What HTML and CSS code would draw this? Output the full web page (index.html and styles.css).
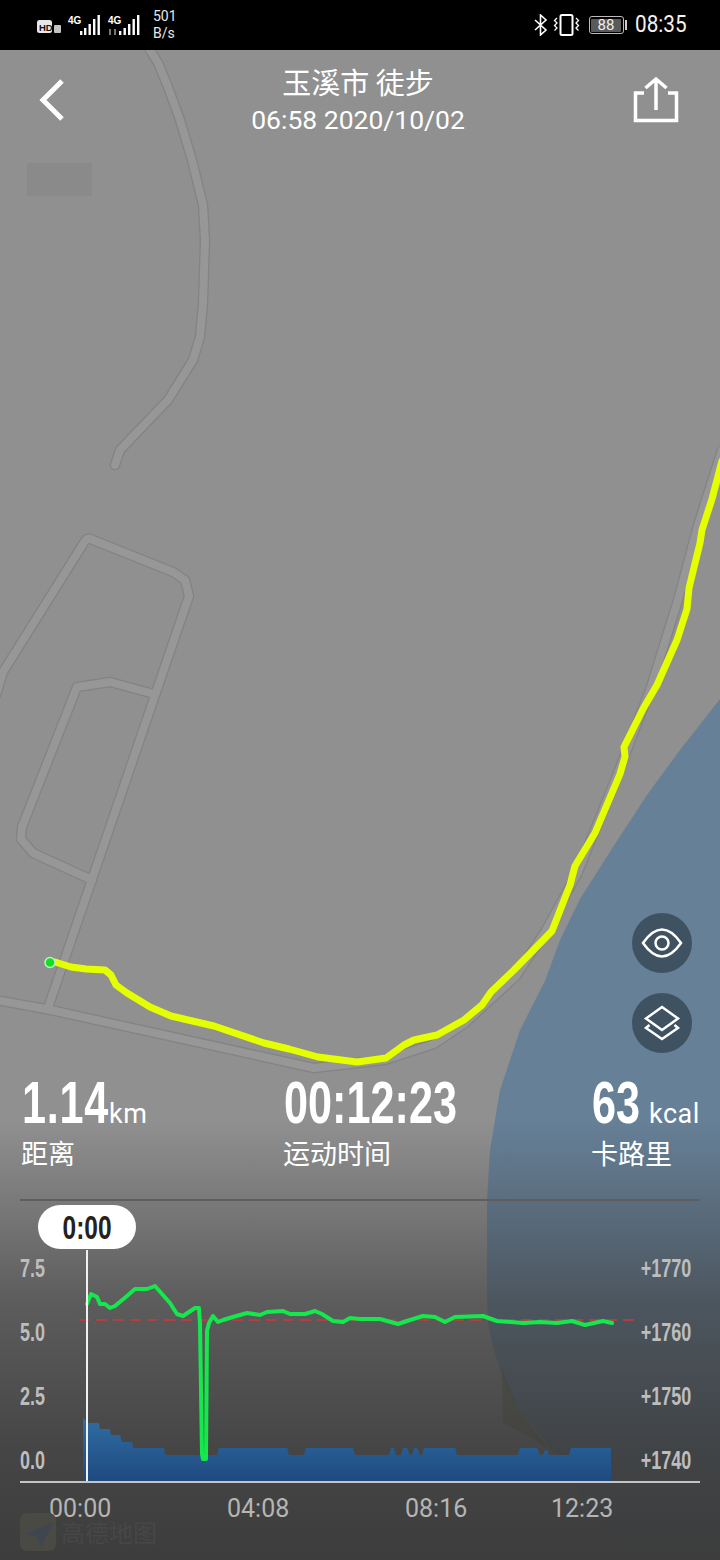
FILE: index.html
```html
<!DOCTYPE html>
<html lang="zh-CN">
<head>
<meta charset="utf-8">
<title>玉溪市 徒步</title>
<link rel="stylesheet" href="styles.css">
</head>
<body>
<div class="screen">
  <header class="statusbar">
    <div class="status-group">
      <svg class="status-left" width="104" height="26" viewBox="37 12 104 26">
        <rect x="37" y="20" width="15" height="13" rx="2.5" fill="#e8e8e8"/>
        <rect x="54" y="25" width="7" height="8" rx="1" fill="#c4c4c4"/>
        <g fill="#fff">
          <rect x="80" y="31" width="2.4" height="4"/><rect x="84" y="28" width="2.4" height="7"/><rect x="88.5" y="24" width="2.4" height="11"/><rect x="93" y="19" width="2.4" height="16"/><rect x="97.5" y="15" width="2.4" height="20"/>
          <rect x="119" y="31" width="2.4" height="4"/><rect x="123.5" y="28" width="2.4" height="7"/><rect x="128" y="24" width="2.4" height="11"/><rect x="132.5" y="19" width="2.4" height="16"/><rect x="137" y="15" width="2.4" height="20"/>
        </g>
        <path d="M110 29v6M115 29v6" stroke="#777" stroke-width="2"/>
        <text class="net" x="68" y="24">4G</text>
        <text class="net" x="108" y="24">4G</text>
        <text class="hd" x="39" y="30.5">HD</text>
      </svg>
      <div class="speed"><span>501</span><span>B/s</span></div>
    </div>
    <div class="status-group right">
      <svg width="14" height="22" viewBox="0 0 14 22" fill="none" stroke="#fff" stroke-width="1.6"><path d="M1 6l11 10-5.500 5V1l5.500 5L1 16"/></svg>
      <svg width="28" height="24" viewBox="0 0 28 24" fill="none" stroke="#fff" class="vibrate"><rect x="7.500" y="2" width="12" height="20" rx="1.500" stroke-width="2"/><path d="M4 5L1.500 7.500 4 10 1.500 12.500 4 15 1.500 17.500M23 5l2.500 2.500L23 10l2.500 2.500L23 15l2.500 2.500" stroke-width="1.300"/></svg>
      <div class="battery"><span class="battery-fill">88</span></div>
      <span class="battery-nub"></span>
      <span class="clock">08:35</span>
    </div>
  </header>

  <main class="stage">
    <svg class="map" viewBox="0 50 720 1510" width="720" height="1510" aria-hidden="true">
      <path class="water" d="M720 699L680 750 647 795 613 847 580 899 560 940 545 981 520 1030 500 1090 490 1150 487 1200 487 1300 488 1323 493 1347 503 1380 517 1407 550 1447 603 1530 640 1560H720Z"/>
      <path class="park" d="M502 1367L503 1423 527 1435 550 1450 517 1407Z"/>
      <rect class="blur" x="27" y="163" width="65" height="33"/>
      <g class="road-outer">
        <path d="M150 50L158 63 168 87 180 120 192 160 203 205 205 240 203 303 200 337 193 360 168 400 120 450 115 465"/>
        <path d="M-4 695L3 672 85 541Q88 537 93 540L173 572 185 580 189 596 48 1008"/>
        <path d="M154 694L110 682 77 687 22 827 21 839 33 853 92 880"/>
        <path d="M-4 1000L46 1009 314 1068 385 1060 434 1044 464 1024 516 976 545 932 578 872 620 768 650 690 678 600 698 525 722 450"/>
      </g>
      <g class="road-inner">
        <path d="M150 50L158 63 168 87 180 120 192 160 203 205 205 240 203 303 200 337 193 360 168 400 120 450 115 465"/>
        <path d="M-4 695L3 672 85 541Q88 537 93 540L173 572 185 580 189 596 48 1008"/>
        <path d="M154 694L110 682 77 687 22 827 21 839 33 853 92 880"/>
        <path d="M-4 1000L46 1009 314 1068 385 1060 434 1044 464 1024 516 976 545 932 578 872 620 768 650 690 678 600 698 525 722 450"/>
      </g>
      <path class="track" d="M55 962L71 967 86 969 105 970 111 975 116 985 127 993 150 1007 171 1016 214 1026 264 1043 289 1049 318 1057 357 1062 386 1058 404 1045 414 1040 437 1035 464 1020 482 1005 491 992 514 970 552 931 570 885 575 866 595 833 620 774 625 757 624 747 643 709 657 685 677 640 687 609 689 588 700 543 702 530 712 499 722 461"/>
      <circle class="start" cx="50" cy="962.500" r="5"/>
    </svg>
    <div class="shade"></div>

    <div class="content">
      <div class="topbar">
        <svg class="back" width="40" height="48" viewBox="0 0 40 48" fill="none" stroke="#fff" stroke-width="5"><path d="M25 5L6 24l19 19"/></svg>
        <div class="title">
          <div class="title-main">玉溪市 徒步</div>
          <div class="title-sub">06:58 2020/10/02</div>
        </div>
        <svg class="share" width="46" height="48" viewBox="0 0 46 48" fill="none" stroke="#fff" stroke-width="3.500"><path d="M11 17H2.500v27.500h41V17H35"/><path d="M23 34V3M12.500 12L23 3l10.500 9"/></svg>
      </div>

      <div class="map-tools">
        <button class="tool" type="button" aria-label="显示">
          <svg width="42" height="32" viewBox="0 0 42 32" fill="none" stroke="#fff" stroke-width="2.500"><path d="M2 16C9 6 15 2.500 21 2.500S33 6 40 16C33 26 27 29.500 21 29.500S9 26 2 16Z"/><circle cx="21" cy="16" r="6.500"/></svg>
        </button>
        <button class="tool" type="button" aria-label="图层">
          <svg width="40" height="36" viewBox="0 0 40 36" fill="none" stroke="#fff" stroke-width="2.500"><path d="M20 2L36 13.500 20 25 4 13.500Z"/><path d="M7.500 20L4 23 20 34 36 23 32.500 20"/></svg>
        </button>
      </div>

      <section class="stats">
        <div class="stat"><div class="stat-value"><span class="num num-dist">1.14</span><small class="unit-km">km</small></div><div class="stat-label">距离</div></div>
        <div class="stat"><div class="stat-value"><span class="num">00:12:23</span></div><div class="stat-label">运动时间</div></div>
        <div class="stat"><div class="stat-value"><span class="num num-cal">63</span><small class="unit-kcal">kcal</small></div><div class="stat-label">卡路里</div></div>
      </section>

      <section class="chart">
        <div class="plot">
          <svg class="plot-svg" viewBox="20 1200 680 280" width="680" height="280" aria-hidden="true">
            <defs>
              <linearGradient id="bars" x1="0" y1="0" x2="0" y2="1"><stop offset="0" stop-color="#2f6da3"/><stop offset="1" stop-color="#1f4a80"/></linearGradient>
            </defs>
            <path fill="url(#bars)" d="M83 1480V1417L89 1422H99L100 1428H110L111 1434H120L122 1441H132L133 1447H164L165 1454H217L219 1447H287L289 1454H304L306 1447H353L355 1454H389L391 1447H394L396 1454H401L403 1447H407L410 1454H412L414 1447H417L420 1454H422L424 1447H455L457 1454H518L520 1447H537L540 1454H543L545 1449H547L549 1454H569L571 1447H611V1480Z"/>
            <path class="avg" d="M79 1319H634"/>
            <path class="speed-line" d="M87 1303L91 1293 97 1296 100 1303 105 1303 110 1307 115 1305 127 1295 135 1288 147 1288 155 1285 170 1302 177 1313 183 1315 195 1307 199 1307 200 1323 202 1453 203 1458 206 1458 207 1330 209 1322 213 1315 218 1321 223 1319 233 1316 247 1312 260 1314 267 1311 283 1310 290 1313 305 1313 315 1310 322 1313 333 1320 343 1321 350 1317 360 1318 380 1318 398 1323 410 1319 423 1315 435 1316 445 1321 455 1316 483 1315 497 1320 523 1322 540 1321 557 1322 572 1320 585 1324 603 1320 612 1322"/>
            <path class="cursor" d="M87 1249V1480"/>
          </svg>
          <div class="y-axis y-left"><span>7.5</span><span>5.0</span><span>2.5</span><span>0.0</span></div>
          <div class="y-axis y-right"><span>+1770</span><span>+1760</span><span>+1750</span><span>+1740</span></div>
          <div class="pill"><span>0:00</span></div>
        </div>
        <div class="x-axis"><span>00:00</span><span>04:08</span><span>08:16</span><span>12:23</span></div>
        <div class="attribution">
          <svg width="36" height="38" viewBox="0 0 36 38"><rect width="36" height="38" rx="7" fill="#4a4a45"/><path d="M33 9L6 21l11 3 4 10Z" fill="#3f4650"/></svg>
          <span>高德地图</span>
        </div>
      </section>
    </div>
  </main>
</div>
</body>
</html>
```
FILE: styles.css
```css
* { box-sizing: border-box; }
html, body { margin: 0; padding: 0; }
body { width: 720px; height: 1560px; overflow: hidden; background: #000; font-family: Roboto, "Noto Sans CJK SC", sans-serif; color: #fff; }
.screen { width: 720px; height: 1560px; display: flex; flex-direction: column; }

.statusbar { height: 50px; flex: none; background: #000; display: flex; justify-content: space-between; align-items: center; padding: 0 37px; }
.status-group { display: flex; align-items: center; }
.status-left { display: block; }
.net { font: 700 10px "Liberation Sans", sans-serif; fill: #fff; }
.hd { font: 700 9.5px "Liberation Sans", sans-serif; fill: #111; }
.speed { display: flex; flex-direction: column; margin-left: 12px; font: 14px/17px Roboto, sans-serif; color: #e8e8e8; }
.vibrate { margin-left: 5px; }
.battery { width: 35px; height: 18px; margin-left: 8px; border: 1.500px solid #bbb; border-radius: 3px; padding: 1.500px; display: flex; }
.battery-fill { flex: 1; background: #5a5a5a; border-radius: 1px; font: 15px/12px Roboto, sans-serif; color: #eee; text-align: center; }
.battery-nub { width: 2px; height: 10px; margin-left: 1.500px; background: #ccc; }
.clock { margin-left: 8px; font: 23px/26px Roboto, sans-serif; color: #f2f2f2; transform: scaleX(.9); transform-origin: left center; width: 48px; }

.stage { position: relative; height: 1510px; background: #8f908f; overflow: hidden; }
.map { position: absolute; left: 0; top: 0; display: block; }
.water { fill: #668097; }
.park { fill: #5f6a45; opacity: .6; }
.blur { fill: #898a89; }
.road-outer path, .road-inner path, .track, .speed-line, .cursor, .avg { fill: none; stroke-linejoin: round; }
.road-outer path { stroke: #828382; stroke-width: 10.500; stroke-linecap: round; }
.road-inner path { stroke: #969796; stroke-width: 8; stroke-linecap: round; }
.track { stroke: #e3ff00; stroke-width: 7; stroke-linecap: round; }
.start { fill: #0fe01f; stroke: #bdf0c0; stroke-width: 1.500; }
.shade { position: absolute; left: 0; right: 0; bottom: 0; height: 440px; background: linear-gradient(to bottom, rgba(60,60,60,0) 0, rgba(60,60,60,.28) 85px, rgba(60,60,60,.61) 180px, rgba(60,60,60,.89) 330px, rgba(60,60,60,.99) 435px); }

.content { position: relative; height: 100%; display: flex; flex-direction: column; }
.topbar { height: 90px; flex: none; display: grid; grid-template-columns: 1fr auto 1fr; padding: 0 41px 0 37px; }
.back { margin-top: 26px; }
.title { text-align: center; }
.title-main { margin-top: 11px; font: 29px/40px "Noto Sans CJK SC", sans-serif; }
.title-sub { font: 26.5px/38px Roboto, sans-serif; }
.share { margin-top: 26px; justify-self: end; }

.map-tools { flex: 1; display: flex; flex-direction: column; align-items: flex-end; justify-content: flex-end; gap: 20px; padding: 0 28px 0 0; margin-bottom: 18px; }
.tool { width: 60px; height: 60px; padding: 0; border: 0; border-radius: 50%; background: #3f5262; display: flex; align-items: center; justify-content: center; }

.stats { height: 128px; flex: none; display: grid; grid-template-columns: 262px 308px 1fr; padding-left: 22px; }
.stat-value { height: 64px; display: flex; align-items: baseline; white-space: nowrap; }
.num { display: inline-block; font: 700 60px/64px "Liberation Sans", sans-serif; transform: scaleX(.72); transform-origin: left center; }
.num-dist { width: 82px; letter-spacing: 1px; }
.num-cal { width: 45px; }
.stat-value small { font: 27px/27px Roboto, sans-serif; letter-spacing: .5px; }
.unit-km { margin-left: 5px; }
.unit-kcal { margin-left: 12px; }
.stat-label { font: 27px/36px "Noto Sans CJK SC", sans-serif; margin-left: -1px; }

.chart { flex: none; height: 361px; margin: 0 20px; position: relative; border-top: 2px solid #5e5e5e; }
.plot { position: relative; height: 282px; border-bottom: 2px solid #c4c4c4; }
.plot-svg { position: absolute; left: 0; top: 0; display: block; }
.avg { stroke: #c83a3a; stroke-width: 2; stroke-dasharray: 11 6; opacity: .85; }
.speed-line { stroke: #14e84c; stroke-width: 4; stroke-linecap: round; }
.cursor { stroke: #f0f0f0; stroke-width: 2; }
.pill { position: absolute; left: 18px; top: 4px; width: 98px; height: 44px; border-radius: 22px; background: #fff; color: #222; display: flex; justify-content: center; font: 700 34px/44px "Liberation Sans", sans-serif; }
.pill span { display: block; transform: scaleX(.72); }
.y-axis { position: absolute; top: 55px; height: 216px; display: flex; flex-direction: column; justify-content: space-between; font: 700 25px/24px "Liberation Sans", sans-serif; color: #bdbdbd; }
.y-axis span { display: block; transform: scaleX(.72); }
.y-left { left: 0; }
.y-left span { transform-origin: left center; }
.y-right { right: 9px; text-align: right; }
.y-right span { transform-origin: right center; }
.x-axis { display: grid; grid-template-columns: 178px 178px 146px auto; padding: 11px 0 0 29px; font: 25px/30px Roboto, sans-serif; color: #b5b5b5; }
.attribution { position: absolute; left: 0; top: 312px; display: flex; align-items: center; gap: 5px; font: 24px/30px "Noto Sans CJK SC", sans-serif; color: #474747; }
```
